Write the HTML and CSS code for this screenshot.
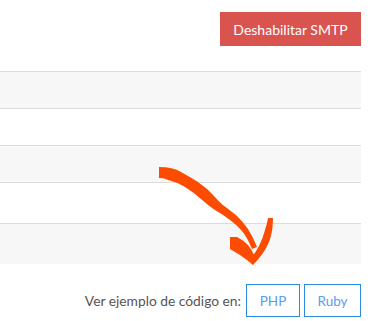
FILE: index.html
```html
<!DOCTYPE html>
<html lang="es">
<head>
  <meta charset="UTF-8">
  <title>SMTP</title>
  <link rel="stylesheet" href="styles.css">
</head>
<body>

  <div class="panel">
    <div class="cabecera">
      <button class="btn-peligro">Deshabilitar SMTP</button>
    </div>

    <div class="tabla">
      <div class="fila gris"></div>
      <div class="fila"></div>
      <div class="fila gris"></div>
      <div class="fila alta"></div>
      <div class="fila gris alta"></div>
    </div>

    <div class="ejemplos">
      <span class="etiqueta">Ver ejemplo de código en:</span>
      <button class="btn-linea">PHP</button>
      <button class="btn-linea ruby">Ruby</button>
    </div>
  </div>

  <!-- flecha dibujada encima -->
  <svg class="flecha" width="382" height="321" viewBox="0 0 382 321">
    <path d="M159 167 Q173 167 181 172 Q190 177 198 182 Q207 188 214 196 Q222 205 227 208 Q232 212 237 216 Q243 222 248 229 Q253 237 257 247 L252 249 Q247 237 242 231 Q237 225 230 220 Q222 214 215 210 Q209 206 201 199 Q193 192 185 187 Q177 182 168 180 Q165 178 159 178 Z" />
    <path d="M230 237 L237 237 Q243 240 248 245 Q252 250 254 255 L253 265 Q246 259 240 255 Q235 252 230 249 Z" />
    <path d="M268 218 L273 218 Q273 228 271 236 Q268 246 263 253 Q258 260 253 265 L251 258 Q256 252 259 246 Q263 238 265 230 Q267 224 268 218 Z" />
  </svg>

</body>
</html>
```

FILE: styles.css
```css
* {
  box-sizing: border-box;
}

body {
  margin: 0;
  background: #fff;
  font-family: 'Lato', 'Open Sans', sans-serif;
  color: #555;
  overflow: hidden;
}

.panel {
  width: 361px;
  padding-top: 12px;
}

.cabecera {
  display: flex;
  justify-content: flex-end;
  height: 59px;
}

.btn-peligro {
  width: 141px;
  height: 34px;
  background-color: #d9534f;
  color: #fff;
  border: none;
  font-family: inherit;
  font-size: 14px;
  padding: 0;
}

.tabla {
  display: flex;
  flex-direction: column;
}

.fila {
  height: 37px;
  border-top: 1px solid #dcdcdc;
}

.fila.alta {
  height: 41px;
}

.fila.gris {
  background-color: #f7f7f7;
}

.ejemplos {
  display: flex;
  justify-content: flex-end;
  align-items: center;
  gap: 4px;
  margin-top: 20px;
}

.etiqueta {
  font-size: 13.8px;
  margin-right: 1px;
}

.btn-linea {
  width: 54px;
  height: 33px;
  background: #fff;
  border: 1px solid #2b8ae6;
  color: #5b9df0;
  font-family: inherit;
  font-size: 13.5px;
  padding: 0;
}

.btn-linea.ruby {
  width: 57px;
}

.flecha {
  position: absolute;
  top: 0;
  left: 0;
  fill: #fc4c02;
  pointer-events: none;
}
```
